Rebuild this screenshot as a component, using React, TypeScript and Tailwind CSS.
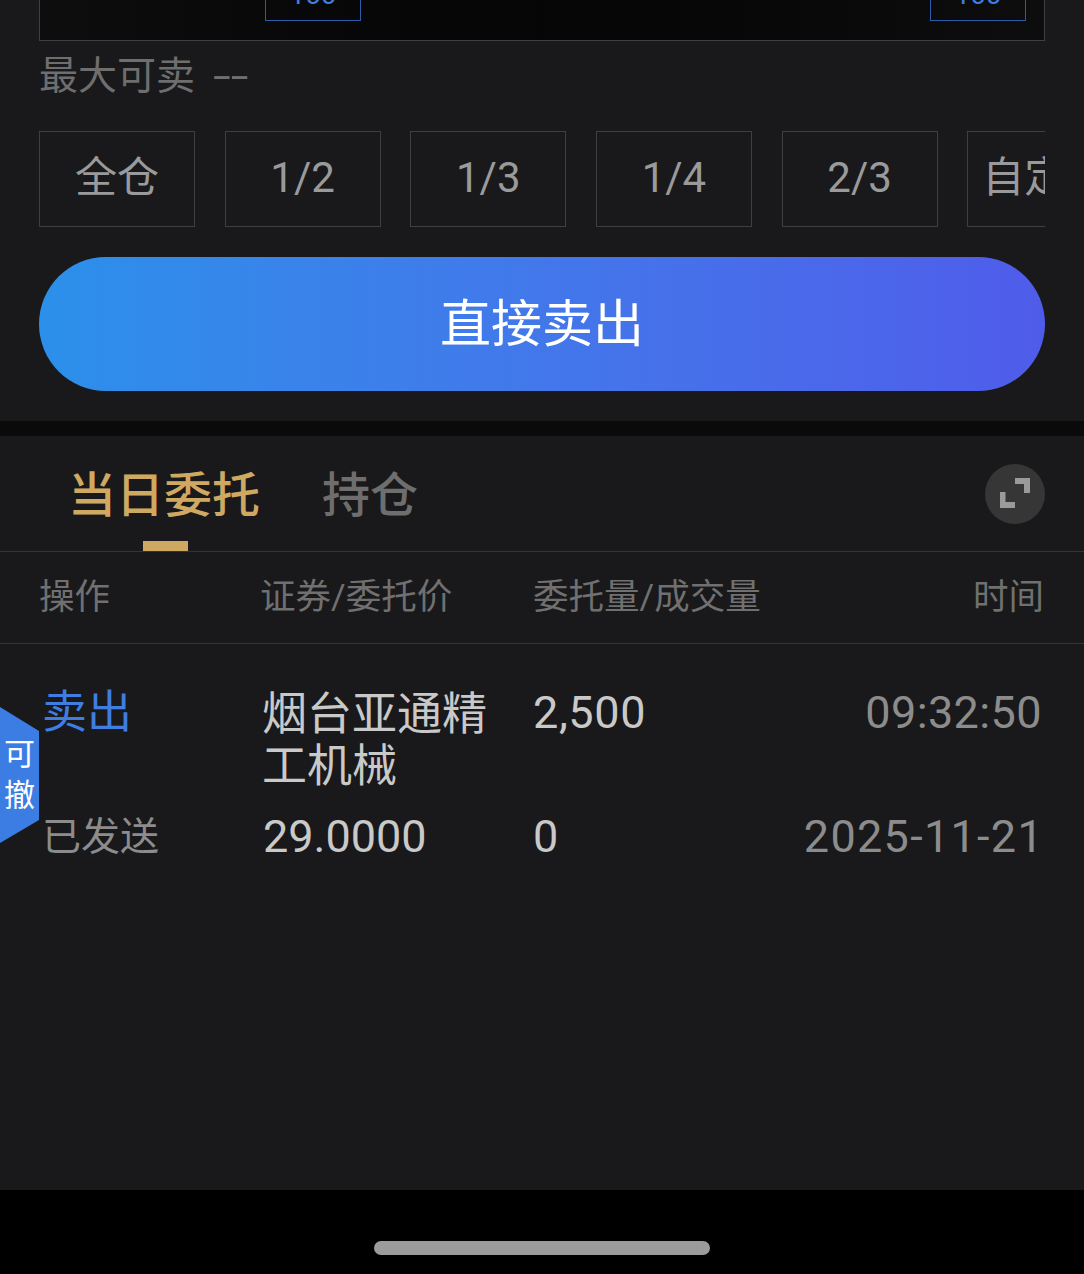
const font = "font-['Roboto','Noto_Sans_CJK_SC',sans-serif]";

function QtyButton({ label }: { label: string }) {
  return (
    <div className="flex h-[96px] w-[156px] shrink-0 items-center justify-center border border-[#3f3f41] text-[42px] leading-none text-[#9a9a9a]">
      <span className="-translate-y-[1px] whitespace-nowrap">{label}</span>
    </div>
  );
}

function StepBox() {
  return (
    <div className="flex h-[21px] w-[96px] items-end justify-center overflow-hidden border border-t-0 border-[#2f5aa8] text-[28px] leading-[30px] text-[#3f7de0]">
      <span className="mb-[10px]">100</span>
    </div>
  );
}

export default function App() {
  return (
    <div className={`${font} flex h-[1274px] w-[1084px] flex-col overflow-hidden bg-black`}>
      <section className="h-[421px] shrink-0 bg-[#19191b] px-[39px]">
        <div className="flex h-[41px] justify-between overflow-hidden border-x border-b border-[#3f3f41] bg-gradient-to-r from-[#0d0d0e] via-[#050505] to-[#0d0d0e] pl-[225px] pr-[18px]">
          <StepBox />
          <StepBox />
        </div>
        <div className="mt-[10px] flex h-[50px] items-center text-[39px] leading-none text-[#6e6e6e]">
          <span>最大可卖</span>
          <span className="ml-[18px] inline-block origin-left scale-x-[1.65]">--</span>
        </div>
        <div className="mt-[30px] flex gap-[29.65px] overflow-hidden">
          <QtyButton label="全仓" />
          <QtyButton label="1/2" />
          <QtyButton label="1/3" />
          <QtyButton label="1/4" />
          <QtyButton label="2/3" />
          <QtyButton label="自定义" />
        </div>
        <div className="mt-[30px] flex h-[134px] items-center justify-center rounded-[67px] bg-gradient-to-r from-[#2b90ea] to-[#4f5cea] text-[51px] leading-none text-white">
          直接卖出
        </div>
      </section>

      <div className="h-[15px] shrink-0 bg-[#0a0a0b]" />

      <section className="relative h-[754px] shrink-0 bg-[#19191b]">
        <div className="relative flex h-[116px] items-center border-b border-[#343436] pl-[68px]">
          <span className="translate-y-[2px] text-[48px] font-medium leading-none text-[#cfa862]">当日委托</span>
          <span className="ml-[62px] translate-y-[2px] text-[48px] font-medium leading-none text-[#6e6e6e]">持仓</span>
          <span className="absolute bottom-0 left-[143px] h-[10px] w-[45px] bg-[#cfa862]" />
          <span className="absolute right-[39px] top-[28px] flex h-[60px] w-[60px] items-center justify-center rounded-full bg-[#363637]">
            <svg width="32" height="32" viewBox="0 0 32 32" fill="#9a9a9a">
              <path d="M16 0h15v15h-6v-9h-9z" />
              <path d="M1 14h5.500v10h9.500v6h-15z" />
            </svg>
          </span>
        </div>

        <div className="flex h-[92px] items-center justify-between border-b border-[#343436] pl-[39px] pr-[40px] text-[35.500px] leading-none text-[#707070]">
          <div className="grid grow grid-cols-[221px_273px_1fr] items-center">
            <span>操作</span>
            <span>证券/委托价</span>
            <span>委托量/成交量</span>
          </div>
          <span>时间</span>
        </div>

        <div className="grid grid-cols-[220px_270px_1fr_auto] pl-[42px] pr-[42px] pt-[43px] text-[45px] leading-[52px] text-[#c9c9c9]">
          <span className="text-[45px] text-[#3f7de0]">卖出</span>
          <span className="w-[235px] translate-y-[2px]">烟台亚通精工机械</span>
          <span className="ml-[1px] tracking-[0.600px]">2,500</span>
          <span className="text-right tracking-[0.400px] text-[#8c8c8c]">09:32:50</span>
          <span className="mt-[20px] text-[39px] text-[#8c8c8c]">已发送</span>
          <span className="ml-[1px] mt-[20px]">29.0000</span>
          <span className="ml-[1px] mt-[20px]">0</span>
          <span className="mt-[20px] -mr-[2px] text-right tracking-[1.300px] text-[#8c8c8c]">2025-11-21</span>
        </div>

        <div className="absolute left-0 top-[271px] flex h-[136px] w-[39px] flex-col items-center justify-center bg-[#3b7de3] text-[31px] leading-[41px] text-white [clip-path:polygon(0_0,100%_24px,100%_113px,0_100%)]">
          <span>可</span>
          <span>撤</span>
        </div>
      </section>

      <div className="flex grow items-start justify-center bg-black pt-[51px]">
        <div className="h-[14px] w-[336px] rounded-full bg-[#9b9b9b]" />
      </div>
    </div>
  );
}
